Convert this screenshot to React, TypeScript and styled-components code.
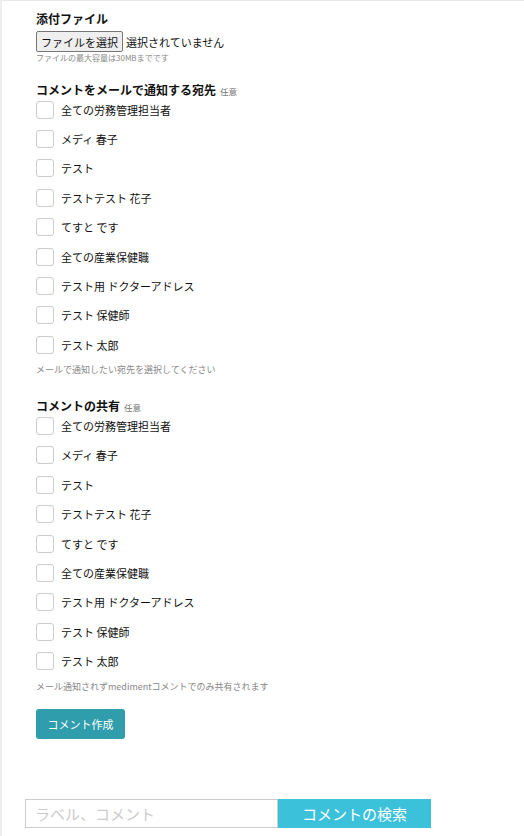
import React from 'react'
import styled, { createGlobalStyle } from 'styled-components'

const GlobalStyle = createGlobalStyle`
  html, body {
    margin: 0;
    padding: 0;
    background: #ffffff;
  }
  body {
    font-family: "Noto Sans CJK JP", "Noto Sans", sans-serif;
    color: #222222;
  }
`

const Page = styled.div`
  box-sizing: border-box;
  min-height: 836px;
  border-top: 1px solid #e8e8e8;
  border-left: 2px solid #eeeeee;
  padding: 10px 0 0 34px;
`

const Label = styled.div`
  font-size: 12px;
  font-weight: 700;
  line-height: 16px;
  height: 16px;
  color: #111111;
  display: flex;
  align-items: baseline;
  gap: 4px;
`

const Optional = styled.span`
  font-size: 8.5px;
  font-weight: 400;
  color: #777777;
`

const FileRow = styled.div`
  display: flex;
  align-items: center;
  gap: 3px;
  margin-top: 4px;
  font-size: 11px;
  color: #111111;
`

const FileButton = styled.button`
  font-family: inherit;
  font-size: 11px;
  height: 21px;
  padding: 0 4px;
  background: #efefef;
  border: 1px solid #767676;
  border-radius: 2px;
  color: #111111;
`

const Hint = styled.div`
  font-size: 8px;
  color: #888888;
  line-height: 12px;
`

const HelpText = styled.div`
  font-size: 9px;
  color: #888888;
  line-height: 12px;
  height: 12px;
  margin-top: 5px;
`

const Section = styled.div<{ $top: number }>`
  margin-top: ${(p) => p.$top}px;
`

const List = styled.div`
  margin-top: -3px;
  display: flex;
  flex-direction: column;
`

const Row = styled.label`
  display: flex;
  align-items: center;
  height: 29.375px;
  gap: 7px;
  font-size: 11px;
  line-height: 14px;
  color: #111111;
`

const Box = styled.span`
  box-sizing: border-box;
  flex: none;
  width: 18px;
  height: 18px;
  border: 1px solid #cccccc;
  border-radius: 3px;
  background: #ffffff;
`

const SubmitButton = styled.button`
  display: block;
  margin-top: 16px;
  width: 89px;
  height: 30px;
  border: none;
  border-radius: 3px;
  background: #2f9dab;
  color: #ffffff;
  font-family: inherit;
  font-size: 11px;
`

const SearchBar = styled.div`
  display: flex;
  margin: 60px 0 0 -11px;
`

const SearchInput = styled.div`
  box-sizing: border-box;
  width: 253px;
  height: 29px;
  border: 1px solid #cccccc;
  display: flex;
  align-items: center;
  padding-left: 9px;
  font-size: 15px;
  color: #cccccc;
`

const SearchButton = styled.div`
  width: 153px;
  height: 29px;
  background: #3cc1da;
  color: #ffffff;
  font-size: 15px;
  display: flex;
  align-items: center;
  justify-content: center;
`

const members = [
  '全ての労務管理担当者',
  'メディ 春子',
  'テスト',
  'テストテスト 花子',
  'てすと です',
  '全ての産業保健職',
  'テスト用 ドクターアドレス',
  'テスト 保健師',
  'テスト 太郎',
]

const MemberList = () => (
  <List>
    {members.map((m) => (
      <Row key={m}>
        <Box />
        <span>{m}</span>
      </Row>
    ))}
  </List>
)

export default function App() {
  return (
    <>
      <GlobalStyle />
      <Page>
        <Label>添付ファイル</Label>
        <FileRow>
          <FileButton>ファイルを選択</FileButton>
          <span>選択されていません</span>
        </FileRow>
        <Hint>ファイルの最大容量は30MBまでです</Hint>

        <Section $top={18}>
          <Label>
            コメントをメールで通知する宛先<Optional>任意</Optional>
          </Label>
          <MemberList />
          <HelpText>メールで通知したい宛先を選択してください</HelpText>
        </Section>

        <Section $top={22}>
          <Label>
            コメントの共有<Optional>任意</Optional>
          </Label>
          <MemberList />
          <HelpText>メール通知されずmedimentコメントでのみ共有されます</HelpText>
        </Section>

        <SubmitButton>コメント作成</SubmitButton>

        <SearchBar>
          <SearchInput>ラベル、コメント</SearchInput>
          <SearchButton>コメントの検索</SearchButton>
        </SearchBar>
      </Page>
    </>
  )
}
